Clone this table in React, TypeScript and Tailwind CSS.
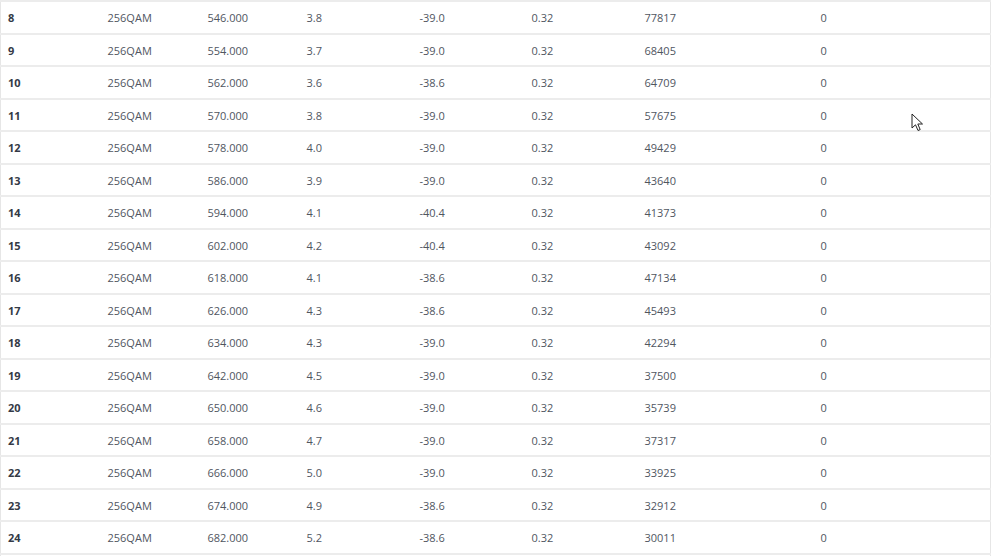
const rows: [number, string, string, string, string, string, string, string][] = [
  [8, '256QAM', '546.000', '3.8', '-39.0', '0.32', '77817', '0'],
  [9, '256QAM', '554.000', '3.7', '-39.0', '0.32', '68405', '0'],
  [10, '256QAM', '562.000', '3.6', '-38.6', '0.32', '64709', '0'],
  [11, '256QAM', '570.000', '3.8', '-39.0', '0.32', '57675', '0'],
  [12, '256QAM', '578.000', '4.0', '-39.0', '0.32', '49429', '0'],
  [13, '256QAM', '586.000', '3.9', '-39.0', '0.32', '43640', '0'],
  [14, '256QAM', '594.000', '4.1', '-40.4', '0.32', '41373', '0'],
  [15, '256QAM', '602.000', '4.2', '-40.4', '0.32', '43092', '0'],
  [16, '256QAM', '618.000', '4.1', '-38.6', '0.32', '47134', '0'],
  [17, '256QAM', '626.000', '4.3', '-38.6', '0.32', '45493', '0'],
  [18, '256QAM', '634.000', '4.3', '-39.0', '0.32', '42294', '0'],
  [19, '256QAM', '642.000', '4.5', '-39.0', '0.32', '37500', '0'],
  [20, '256QAM', '650.000', '4.6', '-39.0', '0.32', '35739', '0'],
  [21, '256QAM', '658.000', '4.7', '-39.0', '0.32', '37317', '0'],
  [22, '256QAM', '666.000', '5.0', '-39.0', '0.32', '33925', '0'],
  [23, '256QAM', '674.000', '4.9', '-38.6', '0.32', '32912', '0'],
  [24, '256QAM', '682.000', '5.2', '-38.6', '0.32', '30011', '0'],
];

const cell = 'px-[7px] pt-[2px] align-middle';

function Cursor() {
  return (
    <svg
      className="pointer-events-none absolute left-[911px] top-[113px]"
      width="13"
      height="19"
      viewBox="0 0 13 19"
      aria-hidden
    >
      <path
        d="M1 1 L1 15 L4.5 11.8 L7 17.5 L9.2 16.6 L6.8 11 L11.5 11 Z"
        fill="#fff"
        stroke="#222"
        strokeWidth="1"
        strokeLinejoin="round"
      />
    </svg>
  );
}

export default function App() {
  return (
    <main className="relative h-[556px] w-[998px] overflow-hidden bg-white font-['Open_Sans',sans-serif] text-[11px] text-[#50565f]">
      <table className="w-[991px] table-fixed border-collapse border-x border-[#e6e6e6]">
        <colgroup>
          <col className="w-[100px]" />
          <col className="w-[100px]" />
          <col className="w-[99px]" />
          <col className="w-[113px]" />
          <col className="w-[112px]" />
          <col className="w-[113px]" />
          <col className="w-[176px]" />
          <col />
        </colgroup>
        <tbody>
          {rows.map((r) => (
            <tr key={r[0]} className="h-[32.5px] border-t-2 border-b-0 border-[#ececec]">
              <td className={`${cell} font-bold text-[#343a46]`}>{r[0]}</td>
              {r.slice(1).map((v, i) => (
                <td key={i} className={cell}>
                  {v}
                </td>
              ))}
            </tr>
          ))}
          <tr className="h-[4px] border-t-2 border-[#ececec]">
            <td colSpan={8} />
          </tr>
        </tbody>
      </table>
      <Cursor />
    </main>
  );
}
